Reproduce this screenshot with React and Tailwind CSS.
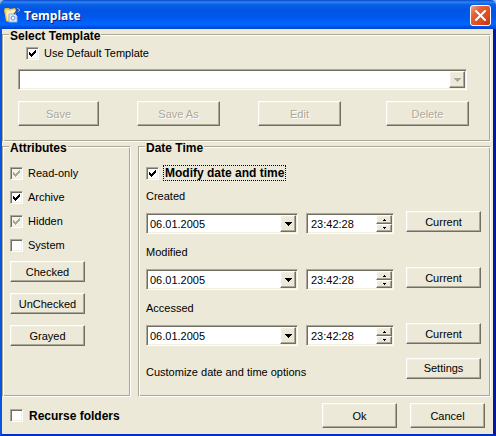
import React, { useState } from 'react';
import clsx from 'clsx';

const BUTTON_BASE =
  'shrink-0 bg-[#ece9d8] border border-t-white border-l-white border-b-[#716f64] border-r-[#716f64] shadow-[inset_-1px_-1px_0_#aca899,inset_1px_1px_0_#f1efe2] flex items-center justify-center';

const SUNKEN =
  'border border-t-[#aca899] border-l-[#aca899] border-b-white border-r-white shadow-[inset_1px_1px_0_#716f64,inset_-1px_-1px_0_#f1efe2]';

const Button = ({ children, className, disabled }) => (
  <button
    type="button"
    disabled={disabled}
    className={clsx(BUTTON_BASE, disabled && 'text-[#aca899] [text-shadow:1px_1px_0_#fff]', className)}
  >
    {children}
  </button>
);

const Group = ({ title, children, className }) => (
  <fieldset
    className={clsx(
      'min-w-0 border border-t-[#aca899] border-l-[#aca899] border-b-white border-r-white shadow-[inset_1px_1px_0_#fff,inset_-1px_-1px_0_#aca899]',
      className
    )}
  >
    <legend className="h-[9px] ml-[6px] px-px bg-[#ece9d8] text-[12px] font-bold leading-3">{title}</legend>
    {children}
  </fieldset>
);

const CheckBox = ({ label, initial = false, grayed, bold, focused }) => {
  const [checked, setChecked] = useState(initial);

  return (
    <label className={clsx('flex items-center h-4', bold ? 'gap-[5px]' : 'gap-1')}>
      <span className="relative flex">
        <input
          type="checkbox"
          checked={checked}
          onChange={(e) => setChecked(e.target.checked)}
          className={clsx('appearance-none w-[13px] h-[13px]', SUNKEN, grayed ? 'bg-[#f5f4ea]' : 'bg-white')}
        />
        {checked && (
          <svg
            viewBox="0 0 13 13"
            shapeRendering="crispEdges"
            className={clsx('absolute inset-0 w-[13px] h-[13px] pointer-events-none', grayed ? 'text-[#aca899]' : 'text-black')}
          >
            <path
              fill="currentColor"
              d="M3 5h1v3h-1zM4 6h1v3h-1zM5 7h1v3h-1zM6 6h1v3h-1zM7 5h1v3h-1zM8 4h1v3h-1zM9 3h1v3h-1z"
            />
          </svg>
        )}
      </span>
      <span
        className={clsx(
          'px-px',
          bold && 'text-[12px] font-bold',
          focused && 'outline-1 outline-dotted outline-black'
        )}
      >
        {label}
      </span>
    </label>
  );
};

const DropDown = ({ label, options = [], disabled, className }) => (
  <div className={clsx('relative', className)}>
    <select
      aria-label={label}
      disabled={disabled}
      className={clsx('appearance-none block w-full h-[21px] bg-white pl-[3px] opacity-100', SUNKEN)}
    >
      {options.map((option) => (
        <option key={option}>{option}</option>
      ))}
    </select>
    <span
      className={clsx(
        BUTTON_BASE,
        'absolute right-[2px] top-[2px] w-4 h-[17px] pointer-events-none',
        disabled ? 'text-[#aca899]' : 'text-black'
      )}
    >
      <svg viewBox="0 0 7 4" shapeRendering="crispEdges" className="w-[7px] h-1">
        <path fill="currentColor" d="M0 0h7v1h-7zM1 1h5v1h-5zM2 2h3v1h-3zM3 3h1v1h-1z" />
      </svg>
    </span>
  </div>
);

const Spinner = ({ label, value }) => (
  <div className={clsx('flex w-[88px] h-[21px] bg-white p-px', SUNKEN)}>
    <input type="text" aria-label={label} defaultValue={value} className="min-w-0 flex-1 bg-transparent pl-[3px] outline-none" />
    <div className="flex flex-col w-4 bg-[#ece9d8]">
      <button type="button" aria-label="Up" className={clsx(BUTTON_BASE, 'h-[9px]')}>
        <svg viewBox="0 0 3 2" shapeRendering="crispEdges" className="w-[3px] h-[2px]">
          <path d="M1 0h1v1h-1zM0 1h3v1h-3z" />
        </svg>
      </button>
      <button type="button" aria-label="Down" className={clsx(BUTTON_BASE, 'h-[8px]')}>
        <svg viewBox="0 0 3 2" shapeRendering="crispEdges" className="w-[3px] h-[2px]">
          <path d="M0 0h3v1h-3zM1 1h1v1h-1z" />
        </svg>
      </button>
    </div>
  </div>
);

const DateRow = ({ title }) => (
  <div className="flex items-end">
    <div className="flex-1 min-w-0">
      <p className="mb-[10px]">{title}</p>
      <div className="flex items-center gap-2">
        <DropDown label={`${title} date`} options={['06.01.2005']} className="w-[152px]" />
        <Spinner label={`${title} time`} value="23:42:28" />
      </div>
    </div>
    <Button className="w-[75px] h-[21px] mb-[2px]">Current</Button>
  </div>
);

const FolderIcon = () => (
  <svg viewBox="0 0 17 16" className="w-[17px] h-4">
    <path d="M0 3l1-2h4l1 1 5-1 1 2v8l-8 4-2-1z" fill="#e8b93c" />
    <path d="M1 3l3-1 1 1 6-1v8l-7 4-1-1z" fill="#fbe08a" />
    <path d="M3 5l8-2v3l-7 2v5l-1-1z" fill="#fff2bd" />
    <path d="M5 7h6l2 2v6H5z" fill="#e4eefb" stroke="#8fb4e4" strokeWidth="1" />
    <circle cx="9" cy="11" r="2" fill="#fff" stroke="#5c8fd6" />
    <path d="M10 7l5-5" stroke="#4c5260" strokeWidth="1.5" />
    <path d="M13 1l3 2-2 2" stroke="#9fb3d1" fill="none" />
  </svg>
);

const TitleBar = () => (
  <header className="bg-[#9fbdf0] -ml-[2px] -mr-[3px]">
    <div className="flex items-center h-[29px] pl-1 pr-[5px] rounded-t-[5px] bg-[linear-gradient(to_bottom,#0a46c8_0%,#2b85f5_7%,#0a5fe6_16%,#0054e3_35%,#0058ee_60%,#0066ff_85%,#0050d8_94%,#003dd0_100%)]">
      <FolderIcon />
      <h1 className="flex-1 ml-[3px] mt-[2px] text-white text-[12px] font-bold font-['Open_Sans','Noto_Sans',sans-serif] [text-shadow:1px_1px_0_#0a1883]">
        Template
      </h1>
      <button
        type="button"
        aria-label="Close"
        className="flex items-center justify-center w-[21px] h-[21px] mt-[2px] rounded-[3px] border border-white bg-[linear-gradient(135deg,#f0a48c_0%,#e5603a_30%,#dd4a1e_70%,#b83410_100%)]"
      >
        <svg viewBox="0 0 11 11" className="w-[11px] h-[11px]">
          <path d="M1 1l9 9M10 1l-9 9" stroke="#fff" strokeWidth="2" strokeLinecap="square" />
        </svg>
      </button>
    </div>
  </header>
);

const App = () => (
  <div className="min-h-screen flex flex-col bg-[#ece9d8] border-l-2 border-r-[3px] border-b-2 border-l-[#0855dd] border-r-[#0019a0] border-b-[#0030c8] text-black text-[11px] leading-[14px] font-['Liberation_Sans',Arial,sans-serif]">
    <TitleBar />

    <Group title="Select Template" className="mt-px mr-[2px] pb-[15px]">
      <div className="mt-[6px] pl-[23px]">
        <CheckBox label="Use Default Template" initial />
      </div>
      <DropDown label="Template" disabled className="mt-2 ml-[15px] mr-[23px]" />
      <div className="flex gap-[38px] mt-[11px] ml-[15px] mr-[21px]">
        <Button disabled className="w-[81px] h-[25px]">Save</Button>
        <Button disabled className="w-[83px] h-[25px]">Save As</Button>
        <Button disabled className="w-[83px] h-[25px]">Edit</Button>
        <Button disabled className="w-[83px] h-[25px] ml-auto">Delete</Button>
      </div>
    </Group>

    <div className="flex flex-1 gap-[7px] mr-[2px]">
      <Group title="Attributes" className="w-[129px]">
        <div className="flex flex-col gap-2 mt-[14px] pl-[7px]">
          <CheckBox label="Read-only" initial grayed />
          <CheckBox label="Archive" initial />
          <CheckBox label="Hidden" initial grayed />
          <CheckBox label="System" />
        </div>
        <div className="flex flex-col gap-[11px] mt-2 pl-[7px]">
          <Button className="w-[75px] h-[21px]">Checked</Button>
          <Button className="w-[75px] h-[21px]">UnChecked</Button>
          <Button className="w-[75px] h-[21px]">Grayed</Button>
        </div>
      </Group>

      <Group title="Date Time" className="flex-1">
        <div className="mt-[14px] pl-[7px]">
          <CheckBox label="Modify date and time" initial bold focused />
        </div>
        <div className="flex flex-col gap-[11px] mt-2 pl-[7px] pr-[9px]">
          <DateRow title="Created" />
          <DateRow title="Modified" />
          <DateRow title="Accessed" />
          <div className="flex items-center justify-between">
            <p className="mt-2">Customize date and time options</p>
            <Button className="w-[75px] h-[21px]">Settings</Button>
          </div>
        </div>
      </Group>
    </div>

    <footer className="flex items-center justify-between h-[37px] px-2">
      <CheckBox label="Recurse folders" bold />
      <div className="flex gap-[13px]">
        <Button className="w-[75px] h-[25px]">Ok</Button>
        <Button className="w-[75px] h-[25px]">Cancel</Button>
      </div>
    </footer>
  </div>
);

export default App;
